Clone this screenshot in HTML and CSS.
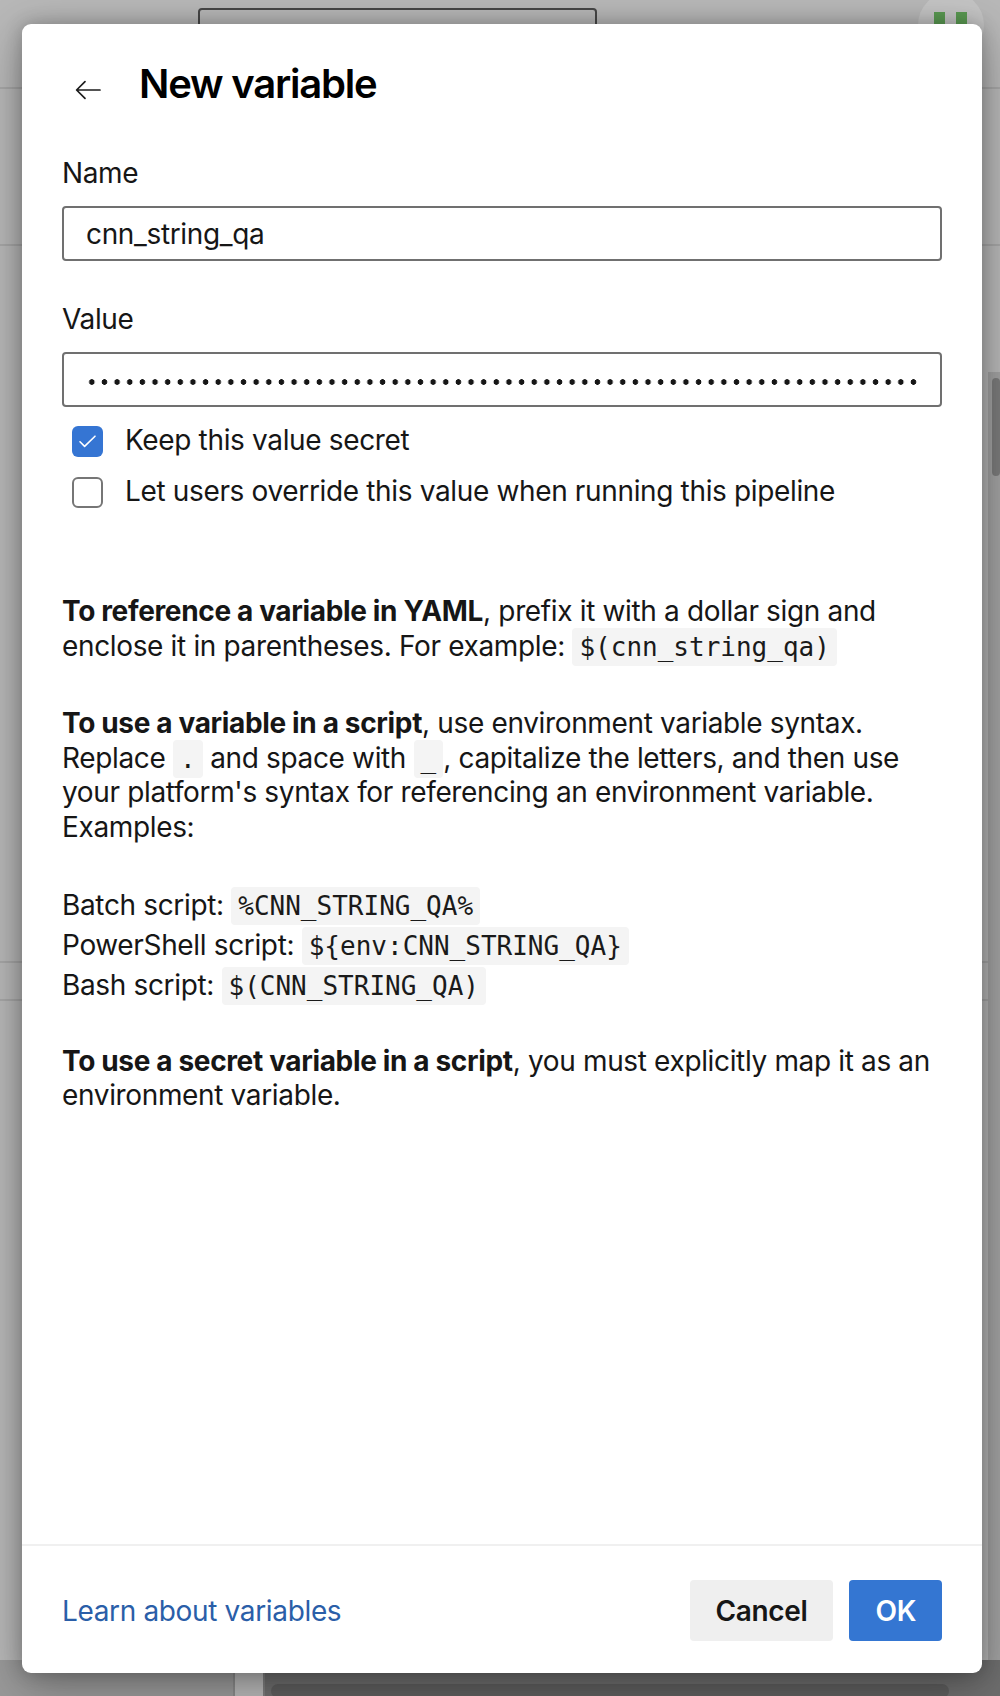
FILE: index.html
```html
<!DOCTYPE html>
<html lang="en">
<head>
<meta charset="utf-8">
<title>New variable</title>
<link rel="stylesheet" href="styles.css">
</head>
<body>
<div class="page" aria-hidden="true">
  <div class="page-search"></div>
  <div class="page-avatar"></div>
  <div class="page-green g1"></div>
  <div class="page-green g2"></div>
  <div class="page-line l1"></div>
  <div class="page-line l2"></div>
  <div class="page-line l3"></div>
  <div class="page-line l4"></div>
  <div class="page-scroll"><div class="page-thumb"></div></div>
  <div class="page-bottom-left"></div>
  <div class="page-bottom"><div class="page-hbar"></div></div>
</div>

<div class="dialog" role="dialog" aria-labelledby="dlg-title">
  <header class="dialog-header">
    <button class="back" aria-label="Back">
      <svg width="26" height="20" viewBox="0 0 26 20"><path d="M25 10H1.8M10 1.6L1.6 10l8.4 8.4" fill="none" stroke="#1c1c1c" stroke-width="1.7" stroke-linecap="round" stroke-linejoin="round"/></svg>
    </button>
    <h1 class="title" id="dlg-title">New variable</h1>
  </header>

  <div class="dialog-body">
    <div class="field-label">Name</div>
    <div class="input"><span class="input-text">cnn_string_qa</span></div>

    <div class="field-label value-label">Value</div>
    <div class="input"><span class="dots"></span></div>

    <div class="checks">
      <div class="check">
        <span class="box checked"><svg width="31" height="31" viewBox="0 0 31 31"><path d="M8 15.8l4.6 4.6L23 10.2" fill="none" stroke="#fff" stroke-width="1.6" stroke-linecap="round" stroke-linejoin="round"/></svg></span>
        <span>Keep this value secret</span>
      </div>
      <div class="check">
        <span class="box"></span>
        <span>Let users override this value when running this pipeline</span>
      </div>
    </div>

    <div class="help">
      <p class="p1"><b>To reference a variable in YAML</b>, prefix it with a dollar sign and<br>enclose it in parentheses. For example: <code>$(cnn_string_qa)</code></p>
      <p class="p2"><b>To use a variable in a script</b>, use environment variable syntax.<br>Replace <code>.</code> and space with <code>_</code>, capitalize the letters, and then use<br>your platform's syntax for referencing an environment variable.<br>Examples:</p>
      <div class="examples">
        <div>Batch script: <code>%CNN_STRING_QA%</code></div>
        <div>PowerShell script: <code>${env:CNN_STRING_QA}</code></div>
        <div>Bash script: <code>$(CNN_STRING_QA)</code></div>
      </div>
      <p class="p4"><b>To use a secret variable in a script</b>, you must explicitly map it as an<br>environment variable.</p>
    </div>
  </div>

  <footer class="dialog-footer">
    <a class="link" href="#">Learn about variables</a>
    <div class="buttons">
      <button class="btn cancel">Cancel</button>
      <button class="btn ok">OK</button>
    </div>
  </footer>
</div>
</body>
</html>
```

FILE: styles.css
```css
* { box-sizing: border-box; }

html, body {
  margin: 0;
  padding: 0;
}

body {
  width: 1000px;
  height: 1696px;
  overflow: hidden;
  position: relative;
  background: #b8b8b8;
  font-family: "Inter", "Noto Sans", sans-serif;
  color: #161616;
}

/* ---- dimmed page underneath the modal ---- */
.page { position: absolute; inset: 0; }

.page-search {
  position: absolute;
  left: 198px; top: 8px;
  width: 399px; height: 44px;
  border: 2px solid #474747;
  border-radius: 4px;
}
.page-avatar {
  position: absolute;
  left: 918px; top: -8px;
  width: 66px; height: 66px;
  border-radius: 50%;
  background: #c4c4c4;
}
.page-green {
  position: absolute;
  top: 12px;
  width: 11px; height: 14px;
  background: #5a9a52;
}
.g1 { left: 934px; }
.g2 { left: 956px; }

.page-line {
  position: absolute;
  left: 0; right: 0;
  height: 2px;
  background: #a7a7a7;
}
.l1 { top: 87px; }
.l2 { top: 244px; }
.l3 { top: 961px; }
.l4 { top: 999px; }

.page-scroll {
  position: absolute;
  left: 988px; top: 372px;
  width: 12px; height: 1310px;
  background: #a2a2a2;
}
.page-thumb {
  margin: 6px 0 0 4px;
  width: 8px; height: 98px;
  border-radius: 4px;
  background: #7b7b7b;
}
.page-bottom-left {
  position: absolute;
  left: 0; top: 1660px;
  width: 235px; height: 36px;
  background: #9a9a9a;
  border-right: 2px solid #8a8a8a;
}
.page-bottom {
  position: absolute;
  left: 263px; right: 0; top: 1660px;
  height: 36px;
  background: #6e6e6e;
  border-left: 2px solid #7d7d7d;
}
.page-hbar {
  margin: 24px 0 0 6px;
  width: 678px; height: 14px;
  border-radius: 7px;
  background: #5e5e5e;
}

/* ---- dialog ---- */
.dialog {
  position: absolute;
  left: 22px; top: 24px;
  width: 960px; height: 1649px;
  background: #fff;
  border-radius: 9px;
  box-shadow: 0 0 18px rgba(0,0,0,0.22), 0 12px 48px rgba(0,0,0,0.32);
  display: flex;
  flex-direction: column;
  letter-spacing: -0.35px;
}

.dialog-header {
  display: flex;
  align-items: flex-start;
  padding: 36px 40px 0;
}
.back {
  margin: 20px 0 0 13px;
  padding: 0;
  width: 26px; height: 20px;
  border: 0;
  background: none;
  display: block;
}
.back svg { display: block; }
.title {
  margin: 0 0 0 38px;
  font-size: 40px;
  line-height: 48px;
  font-weight: 600;
  letter-spacing: -1.2px;
  color: #000;
}

.dialog-body {
  flex: 1;
  padding: 0 40px;
  font-size: 28px;
}

.field-label {
  margin-top: 48px;
  line-height: 34px;
}
.value-label { margin-top: 41px; }

.input {
  margin-top: 16px;
  height: 55px;
  border: 2px solid #707070;
  border-radius: 4px;
  padding: 0 23px 0 22px;
  display: flex;
  align-items: center;
  line-height: 34px;
}
.input-text { color: #161616; }
.dots {
  flex: 1;
  align-self: stretch;
  background-image: radial-gradient(circle, #161616 2.5px, rgba(22,22,22,0) 3.1px);
  background-size: 12.65px 8px;
  background-repeat: repeat-x;
  background-position: -0.5px 23.7px;
}

.checks {
  margin-top: 16px;
  display: flex;
  flex-direction: column;
  gap: 17px;
}
.check {
  display: flex;
  align-items: flex-start;
  line-height: 34px;
}
.box {
  flex: none;
  width: 31px; height: 31px;
  margin: 3px 22px 0 10px;
  border: 2px solid #767676;
  border-radius: 6px;
  background: #fff;
}
.box.checked {
  border: 0;
  background: #3575d3;
}
.box svg { display: block; }

.help { white-space: nowrap; }
.help p { margin: 0; line-height: 34.6px; }
.help b { font-weight: 700; }
.p1 { margin-top: 86px !important; }
.p2 { margin-top: 43px !important; }
.examples { margin-top: 40px; line-height: 40px; }
.p4 { margin-top: 39px !important; }

code {
  font-family: "DejaVu Sans Mono", "Liberation Mono", monospace;
  font-size: 26px;
  line-height: 26px;
  letter-spacing: 0;
  background: #f4f4f4;
  border-radius: 4px;
  padding: 4px 7px;
  color: #1a1a1a;
}

.dialog-footer {
  border-top: 2px solid #f0f0f0;
  padding: 34px 40px 32px;
  display: flex;
  align-items: center;
  justify-content: space-between;
}
.link {
  font-size: 28px;
  color: #2a5ea8;
  text-decoration: none;
}
.buttons { display: flex; gap: 16px; }
.btn {
  height: 61px;
  border: 0;
  border-radius: 4px;
  padding: 0 26px;
  font-family: "Inter", "Noto Sans", sans-serif;
  font-size: 28px;
  font-weight: 600;
  letter-spacing: -0.35px;
}
.cancel { background: #efefef; color: #161616; }
.ok { background: #3476d2; color: #fff; }
```
